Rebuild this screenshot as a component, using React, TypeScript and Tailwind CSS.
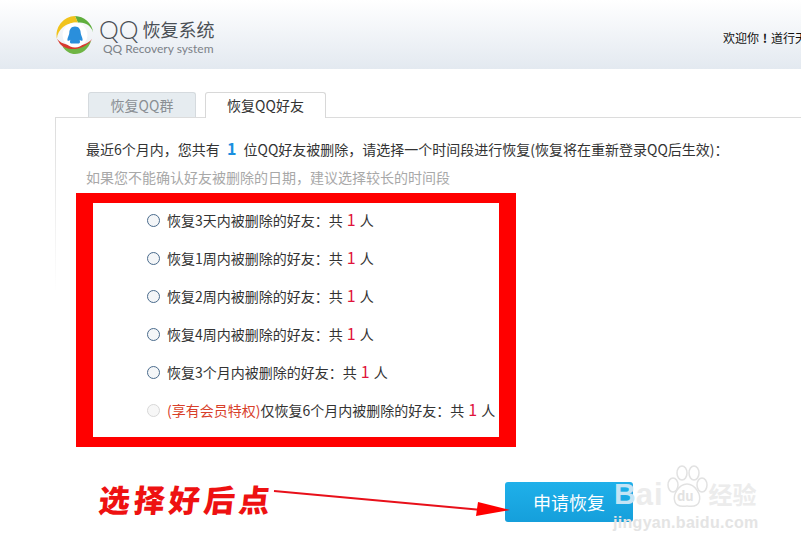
import React from 'react';

const rows = [
  '恢复3天内被删除的好友',
  '恢复1周内被删除的好友',
  '恢复2周内被删除的好友',
  '恢复4周内被删除的好友',
  '恢复3个月内被删除的好友',
];

function Logo() {
  return (
    <svg width="40" height="40" viewBox="0 0 42 42" className="shrink-0">
      <path d="M21 1 A20 20 0 0 1 40 18 C38 11 31 7 24 8 Z" fill="#5fae3c" />
      <path d="M21 1 A20 20 0 0 0 2 25 C3 15 11 8 24 8 C23 5 22 3 21 1 Z" fill="#f1c31c" />
      <path d="M2 25 A20 20 0 0 0 39 25 C33 33 20 34 9 30 C6 29 4 27 2 25 Z" fill="#d8392e" />
      <path d="M8 33 C18 38 30 36 38 27 C35 36 28 41 21 41 C16 41 11 38 8 33 Z" fill="#6fb544" />
      <circle cx="21" cy="21" r="13" fill="#ffffff" />
      <path d="M21 12 C25 12 27 15 27 19 C27 21 29 24 29 26 C29 28 27 27 26 26 C26 28 27 29 25 30 L17 30 C15 29 16 28 16 26 C15 27 13 28 13 26 C13 24 15 21 15 19 C15 15 17 12 21 12 Z" fill="#2a8fdc" />
    </svg>
  );
}

function Radio({ disabled }: { disabled?: boolean }) {
  return (
    <span className={`w-[13px] h-[13px] mt-[5px] rounded-full border-[1.5px] shrink-0 ${disabled ? 'border-[#d8d8d8] bg-[#f7f7f7]' : 'border-[#4a6b8c] bg-[#f4f6f8]'}`} />
  );
}

// centred punctuation like the original's system font
function Punct({ children }: { children: string }) {
  return <span className="inline-block w-[14px] text-center">{children}</span>;
}

function Count() {
  return <span className="text-[#e0143c] text-[16px] mx-[4px]">1</span>;
}

function Annotation() {
  return (
    <>
      <span className="absolute left-[99px] top-[480px] text-[31px] leading-[38px] tracking-[4px] font-black text-[#ee1111] whitespace-nowrap -skew-x-6">
        选择好后点
      </span>
      <svg width="260" height="40" viewBox="0 0 260 40" className="absolute left-[270px] top-[482px]">
        <path d="M4 9 L212 28" stroke="#e8101a" strokeWidth="2" fill="none" />
        <path d="M208 20 L240 28 L206 34 Z" fill="#ff0000" />
      </svg>
    </>
  );
}

function Watermark() {
  return (
    <div className="absolute left-[614px] top-[464px] flex flex-col items-start">
      <div className="flex items-center h-[46px]">
        <span className="text-[#c4e4f5] text-[30px] font-black leading-none mt-[14px] [font-family:'Liberation_Sans',sans-serif]">B</span>
        <span className="text-[#ececec] text-[31px] font-bold leading-none mt-[14px] tracking-[1px] [font-family:'Liberation_Sans',sans-serif]">ai</span>
        <svg width="42" height="46" viewBox="0 0 42 46" className="ml-[2px]">
          <g fill="none" stroke="#e2e2e2" strokeWidth="1.5">
            <ellipse cx="7" cy="21" rx="5" ry="7" />
            <ellipse cx="16" cy="9" rx="5" ry="7" />
            <ellipse cx="28" cy="9" rx="5" ry="7" />
            <ellipse cx="36" cy="21" rx="5" ry="7" />
            <path d="M21 20 C29 20 36 31 33 38 C31 44 24 42 21 42 C18 42 11 44 9 38 C6 31 13 20 21 20 Z" />
          </g>
          <text x="11" y="37" fontSize="13" fontWeight="700" fill="#e2e2e2">du</text>
        </svg>
        <span className="text-[#ececec] text-[24px] font-bold leading-none mt-[14px] ml-[1px]">经验</span>
      </div>
      <span className="text-[#e4e4e4] text-[16px] leading-[20px] font-bold mt-[3px] -ml-[1px] tracking-[0.3px] [font-family:'Liberation_Sans',sans-serif]">jingyan.baidu.com</span>
    </div>
  );
}

export default function App() {
  return (
    <div className="relative w-[801px] h-[550px] overflow-hidden bg-white text-[#333] text-[14px] font-['Noto_Sans_CJK_SC','Liberation_Sans',sans-serif]">
      <header className="h-[69px] bg-gradient-to-b from-white to-[#e3e9f0] flex items-center pl-[55px]">
        <Logo />
        <div className="ml-[4px] mt-[4px] flex flex-col text-[#4a4f55]">
          <div className="flex items-center h-[25px] leading-none">
            <span className="text-[25px] font-light [font-family:Lato,sans-serif]">QQ</span>
            <span className="text-[18px] ml-[4px]">恢复系统</span>
          </div>
          <span className="text-[12px] leading-[16px] -mt-[1px] ml-[4px] text-[#7c8288] [font-family:Lato,sans-serif]">QQ Recovery system</span>
        </div>
        <div className="ml-auto w-[78px] mt-[6px] flex text-[12px] text-[#111] whitespace-nowrap overflow-hidden">
          <span className="shrink-0">欢迎你</span>
          <b className="w-[12px] shrink-0 text-center">!</b>
          <span className="shrink-0">道行天下</span>
        </div>
      </header>

      <div className="flex items-end h-[48px] pl-[88px] gap-[9px]">
        <div className="w-[108px] h-[25px] flex items-center justify-center rounded-t-[3px] border border-b-0 border-[#d5dade] bg-[#e6ecf0] text-[#8a8f94]">恢复QQ群</div>
        <div className="relative z-10 w-[121px] h-[26px] -mb-[1px] flex items-center justify-center rounded-t-[3px] border border-b-0 border-[#d8d8d8] bg-white text-[#333]">恢复QQ好友</div>
      </div>

      <main className="relative ml-[55px] border-t border-[#dcdcdc] pl-[21px] pt-[20px]">
        <span className="absolute left-0 top-0 w-px h-[175px] bg-gradient-to-b from-[#dcdcdc] to-transparent" />
        <p className="pl-[10px] leading-[20px] whitespace-nowrap">
          最近6个月内<Punct>，</Punct>您共有 <b className="text-[#1a8fe0] text-[16px] mx-[4px]">1</b> 位QQ好友被删除<Punct>，</Punct>请选择一个时间段进行恢复(恢复将在重新登录QQ后生效)<Punct>：</Punct>
        </p>
        <p className="pl-[10px] mt-[8px] leading-[20px] text-[#a8a8a8]">如果您不能确认好友被删除的日期<Punct>，</Punct>建议选择较长的时间段</p>
        <div className="mt-[6px] w-[440px] h-[254px] border-x-[17px] border-y-[10px] border-[#ff0000] bg-white flex flex-col pl-[54px] pt-[6px]">
          {rows.map((row) => (
            <div key={row} className="h-[38px] shrink-0 flex items-start gap-[7px] leading-[20px] whitespace-nowrap">
              <Radio />
              <span>{row}<Punct>：</Punct>共<Count />人</span>
            </div>
          ))}
          <div className="h-[38px] shrink-0 flex items-start gap-[7px] leading-[20px] whitespace-nowrap">
            <Radio disabled />
            <span><span className="text-[#d8402a]">(享有会员特权)</span>仅恢复6个月内被删除的好友<Punct>：</Punct>共<Count />人</span>
          </div>
        </div>
        <button className="block ml-[429px] mt-[35px] w-[128px] h-[40px] rounded-[3px] bg-gradient-to-b from-[#1fb0ea] to-[#159fdb] text-white text-[18px]">申请恢复</button>
      </main>

      <Watermark />
      <Annotation />
    </div>
  );
}
